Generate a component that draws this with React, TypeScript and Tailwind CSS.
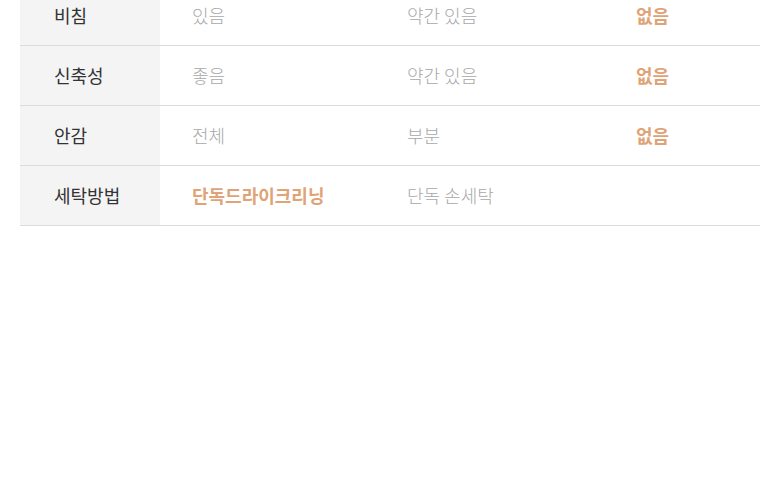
const rows = [
  { label: "비침", a: "있음", b: "약간 있음", c: "없음", hi: "c" },
  { label: "신축성", a: "좋음", b: "약간 있음", c: "없음", hi: "c" },
  { label: "안감", a: "전체", b: "부분", c: "없음", hi: "c" },
  { label: "세탁방법", a: "단독드라이크리닝", b: "단독 손세탁", c: "", hi: "a" },
];

function Cell({ text, hi }: { text: string; hi: boolean }) {
  return (
    <div
      className={`pl-8 flex items-center ${hi ? "text-[#e0a376] font-bold" : "text-[#a8a8a8] font-light"}`}
    >
      {text}
    </div>
  );
}

export default function App() {
  return (
    <div
      className="w-[780px] h-[490px] bg-white overflow-hidden"
      style={{ fontFamily: '"Noto Sans CJK KR", "Noto Sans", sans-serif' }}
    >
      <div className="mx-5 -mt-[14px] text-[18px]">
        {rows.map((r) => (
          <div
            key={r.label}
            className="grid grid-cols-[140px_215px_229px_1fr] h-[60px] border-b border-[#dcdcdc]"
          >
            <div className="bg-[#f4f4f4] pl-[34px] flex items-center text-[#333]">{r.label}</div>
            <Cell text={r.a} hi={r.hi === "a"} />
            <Cell text={r.b} hi={r.hi === "b"} />
            <Cell text={r.c} hi={r.hi === "c"} />
          </div>
        ))}
      </div>
    </div>
  );
}
